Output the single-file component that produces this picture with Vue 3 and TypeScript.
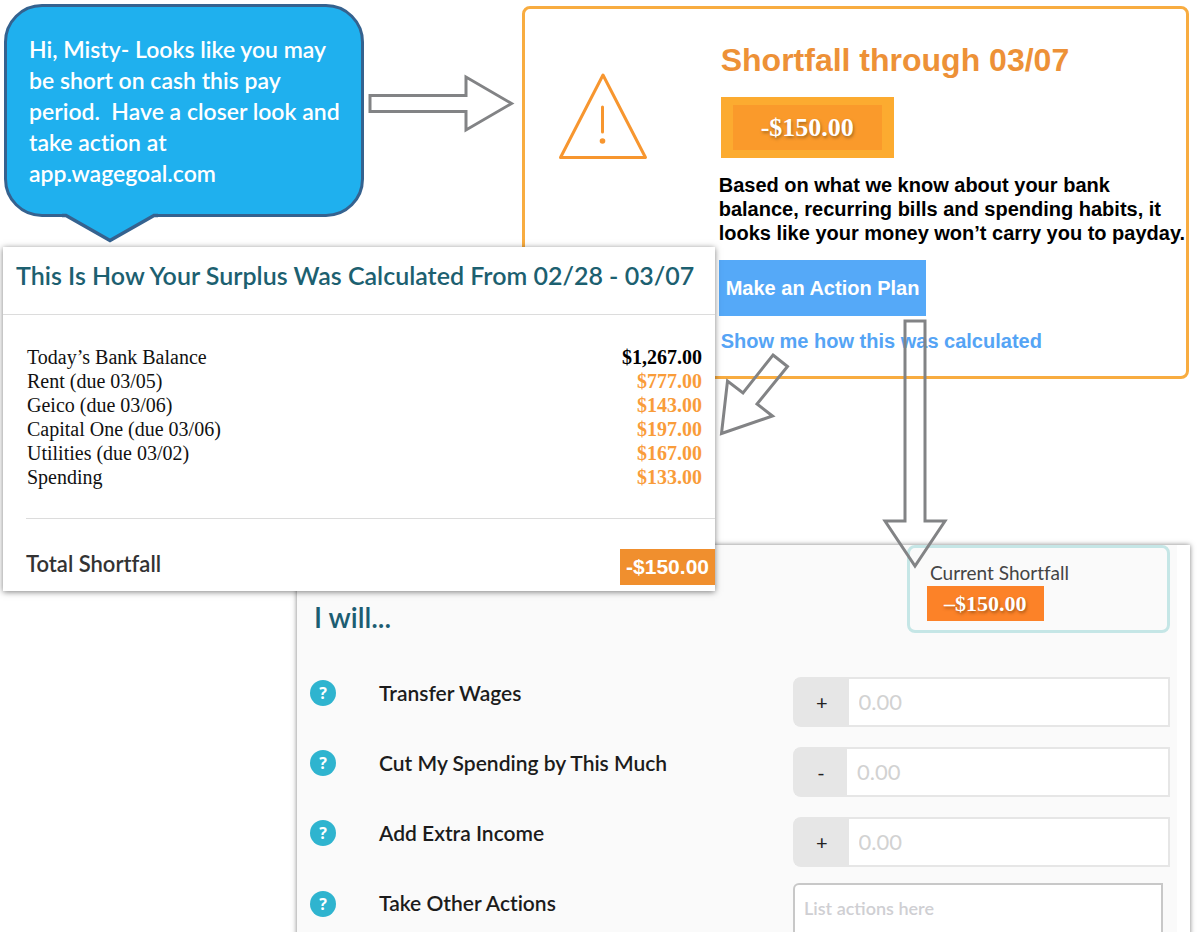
<script setup lang="ts">
import { ref } from 'vue'

interface Bill {
  label: string
  amount: string
  credit?: boolean
}

interface Adjustment {
  id: string
  label: string
  sign: string
}

const bills: Bill[] = [
  { label: 'Today’s Bank Balance', amount: '$1,267.00', credit: true },
  { label: 'Rent (due 03/05)', amount: '$777.00' },
  { label: 'Geico (due 03/06)', amount: '$143.00' },
  { label: 'Capital One (due 03/06)', amount: '$197.00' },
  { label: 'Utilities (due 03/02)', amount: '$167.00' },
  { label: 'Spending', amount: '$133.00' },
]

const adjustments: Adjustment[] = [
  { id: 'transfer', label: 'Transfer Wages', sign: '+' },
  { id: 'cut', label: 'Cut My Spending by This Much', sign: '-' },
  { id: 'income', label: 'Add Extra Income', sign: '+' },
]

const values = ref<Record<string, string>>({ transfer: '', cut: '', income: '' })
const otherActions = ref('')
</script>

<template>
  <main class="board">
    <section class="bubble">
      <p>
        Hi, Misty- Looks like you may<br />
        be short on cash this pay<br />
        period.&nbsp; Have a closer look and<br />
        take action at<br />
        app.wagegoal.com
      </p>
      <svg class="tail" width="96" height="30" viewBox="0 0 96 30" aria-hidden="true">
        <path d="M0 0H96V3H93L48 28L3 3H0Z" fill="#1fb0ee" />
        <path d="M0 2.5H4L48 27.5L92 2.5H96" fill="none" stroke="#35628f" stroke-width="3.5" />
      </svg>
    </section>

    <svg class="arrow arrow-right" width="147" height="60" viewBox="0 0 147 60" aria-hidden="true">
      <path d="M2 22.5H98V4L143.5 30.5L98 57V38.5H2Z" />
    </svg>

    <section class="alert">
      <div class="alert-icon">
        <svg width="90" height="88" viewBox="0 0 90 88" aria-hidden="true">
          <path d="M45 3L87.5 85.5H2.5Z" fill="none" stroke="#f7962f" stroke-width="3" stroke-linejoin="round" />
          <path d="M44.5 35V60" stroke="#f7962f" stroke-width="3" stroke-linecap="round" />
          <circle cx="44.5" cy="69" r="2.8" fill="#f7962f" />
        </svg>
      </div>
      <div class="alert-body">
        <h1>Shortfall through 03/07</h1>
        <div class="amount-frame"><strong>-$150.00</strong></div>
        <p>
          Based on what we know about your bank<br />
          balance, recurring bills and spending habits, it<br />
          looks like your money won’t carry you to payday.
        </p>
        <div class="action">
          <button type="button">Make an Action Plan</button>
          <svg class="arrow arrow-down" width="66" height="250" viewBox="0 0 66 250" aria-hidden="true">
            <path d="M23 2H43V202H63L33 247L3 202H23Z" />
          </svg>
        </div>
        <div class="action">
          <a href="#breakdown">Show me how this was calculated</a>
          <svg class="arrow arrow-left" width="72" height="84" viewBox="0 0 72 84" aria-hidden="true">
            <path d="M54 4L68.5 15.5L38 53L53.5 65L2.5 82.5L8.5 30L24 42Z" />
          </svg>
        </div>
      </div>
    </section>

    <section id="breakdown" class="breakdown">
      <h2>This Is How Your Surplus Was Calculated From 02/28 - 03/07</h2>
      <table>
        <tbody>
          <tr v-for="bill in bills" :key="bill.label">
            <th scope="row">{{ bill.label }}</th>
            <td :class="{ credit: bill.credit }">{{ bill.amount }}</td>
          </tr>
        </tbody>
      </table>
      <div class="total">
        <span>Total Shortfall</span>
        <strong>-$150.00</strong>
      </div>
    </section>

    <section class="plan">
      <header>
        <h2>I will...</h2>
        <div class="current">
          <span>Current Shortfall</span>
          <strong>–$150.00</strong>
        </div>
      </header>
      <form @submit.prevent>
        <div v-for="item in adjustments" :key="item.id" class="row">
          <button type="button" class="help" :aria-label="`About ${item.label}`">?</button>
          <label :for="item.id">{{ item.label }}</label>
          <div class="field">
            <span class="sign">{{ item.sign }}</span>
            <input :id="item.id" v-model="values[item.id]" type="text" placeholder="0.00" />
          </div>
        </div>
        <div class="row other">
          <button type="button" class="help" aria-label="About Take Other Actions">?</button>
          <label for="other">Take Other Actions</label>
          <textarea id="other" v-model="otherActions" placeholder="List actions here"></textarea>
        </div>
      </form>
    </section>
  </main>
</template>

<style>
body {
  background: #fff;
}
</style>

<style scoped>
* {
  box-sizing: border-box;
}

h1,
h2,
p {
  margin: 0;
}

.board {
  display: grid;
  grid-template-columns: 294fr 66fr 160fr 192fr 475fr;
  grid-template-rows: minmax(247px, auto) minmax(132px, auto) minmax(166px, auto) 46px minmax(341px, 1fr);
  min-height: 100vh;
  padding: 0 8px 0 3px;
  overflow: hidden;
  font-family: Lato, "Open Sans", sans-serif;
  font-variant-ligatures: none;
}

.bubble {
  position: relative;
  grid-area: 1 / 1 / 2 / 3;
  align-self: start;
  min-height: 213px;
  margin: 4px -1px 0 1px;
  padding: 27px 0 25px 22px;
  border: 3px solid #35628f;
  border-radius: 38px;
  background: #1fb0ee;
  color: #fff;
  font-size: 23px;
  font-weight: 600;
  line-height: 31px;
  white-space: nowrap;
}

.tail {
  position: absolute;
  top: 100%;
  left: 55px;
  margin-top: -1px;
}

.arrow {
  overflow: visible;
  fill: none;
  stroke: #828385;
  stroke-width: 3;
}

.arrow-right {
  grid-area: 1 / 3 / 2 / 4;
  margin: 73px 0 0 5px;
}

.alert {
  display: grid;
  grid-template-columns: 29% 1fr;
  grid-area: 1 / 4 / 3 / 6;
  margin: 6px 1px 0 -1px;
  border: 3px solid #f8ac40;
  border-radius: 8px;
}

.alert-icon {
  padding: 63px 0 0 33px;
}

.alert-body {
  display: flex;
  flex-direction: column;
  align-items: flex-start;
  padding: 32px 0 0 2px;
  font-family: "Liberation Sans", Arial, sans-serif;
  font-size: 20px;
  font-weight: 700;
  line-height: 24px;
  white-space: nowrap;
}

.alert-body h1 {
  padding-left: 2px;
  color: #ed9137;
  font-size: 32px;
  line-height: 38px;
}

.amount-frame {
  margin: 18px 0 15px 2px;
  padding: 8px 12px;
  background: #fcab30;
}

.amount-frame strong {
  display: block;
  padding: 0 28px;
  background: #fa9a2b;
  color: #fff;
  font-family: "Liberation Serif", "Times New Roman", serif;
  font-size: 26px;
  line-height: 45px;
  text-shadow: 1px 2px 3px rgba(90, 60, 20, 0.5);
}

.alert-body p {
  color: #000;
}

.action {
  position: relative;
}

.action button {
  margin: 15px 0 13px;
  padding: 16px 7px;
  border: 0;
  background: #55a9f8;
  color: #fff;
  font: inherit;
}

.action a {
  padding-left: 2px;
  color: #55a4f5;
  text-decoration: none;
}

.arrow-down {
  position: absolute;
  z-index: 3;
  top: 74px;
  right: -22px;
}

.arrow-left {
  position: absolute;
  z-index: 3;
  top: 22px;
  left: 0;
}

.breakdown {
  z-index: 2;
  display: flex;
  flex-direction: column;
  grid-area: 2 / 1 / 5 / 5;
  background: #fff;
  box-shadow: 0 1px 6px rgba(0, 0, 0, 0.5);
}

.breakdown h2 {
  padding: 11px 0 22px 13px;
  border-bottom: 1px solid #dcdcdc;
  color: #1c6070;
  font-size: 25px;
  font-weight: 600;
  line-height: 34px;
  white-space: nowrap;
}

.breakdown table {
  margin: 30px 13px 29px 24px;
  border-collapse: collapse;
  font-family: "Liberation Serif", "Times New Roman", serif;
  font-size: 20px;
  line-height: 24px;
}

.breakdown th {
  padding: 0;
  color: #111;
  font-weight: 400;
  text-align: left;
}

.breakdown td {
  padding: 0;
  color: #f99c3a;
  font-weight: 700;
  text-align: right;
}

.breakdown td.credit {
  color: #000;
}

.total {
  display: flex;
  align-items: flex-start;
  justify-content: space-between;
  flex: 1;
  margin-left: 23px;
  padding-top: 30px;
  border-top: 1px solid #dcdcdc;
  color: #333;
  font-size: 22px;
  font-weight: 600;
  line-height: 30px;
}

.total strong {
  padding: 0 6px;
  background: #f08f2e;
  color: #fff;
  font-family: "Liberation Sans", Arial, sans-serif;
  font-size: 21px;
  line-height: 36px;
}

.plan {
  z-index: 1;
  display: flex;
  flex-direction: column;
  grid-area: 4 / 2 / 6 / 6;
  padding: 0 7px 0 13px;
  border-right: 13px solid #fff;
  background: #fafafa;
  box-shadow: 0 0 5px rgba(0, 0, 0, 0.5);
}

.plan header {
  display: flex;
  align-items: flex-start;
  justify-content: space-between;
}

.plan h2 {
  padding: 55px 0 0 4px;
  color: #1c5d72;
  font-size: 28px;
  font-weight: 600;
  line-height: 34px;
}

.current {
  display: flex;
  flex-direction: column;
  align-items: flex-start;
  width: 263px;
  height: 88px;
  padding: 14px 17px 0;
  border: 3px solid #c5e6e6;
  border-radius: 8px;
  color: #444;
  font-size: 19px;
  line-height: 22px;
}

.current span {
  padding-left: 3px;
}

.current strong {
  margin-top: 2px;
  padding: 0 17px;
  background: #fc8228;
  color: #fff;
  font-family: "Liberation Serif", "Times New Roman", serif;
  font-size: 22px;
  line-height: 35px;
  text-shadow: 1px 2px 3px rgba(90, 50, 10, 0.5);
}

.plan form {
  display: flex;
  flex: 1;
  flex-direction: column;
  gap: 20px;
  padding-top: 43px;
}

.row {
  display: grid;
  grid-template-columns: 69px 1fr 377px;
  align-items: start;
}

.help {
  width: 26px;
  height: 26px;
  margin: 3px 0;
  padding: 0;
  border: 0;
  border-radius: 50%;
  background: #2fb4cf;
  color: #fff;
  font: 700 16px/26px "Open Sans", sans-serif;
}

.row label {
  color: #1c1c1c;
  font-size: 21px;
  font-weight: 600;
  line-height: 32px;
}

.field {
  display: flex;
  height: 50px;
  border: 2px solid #e6e6e6;
  border-radius: 8px 0 0 8px;
  background: #fff;
}

.sign {
  min-width: 52px;
  padding: 0 21px;
  background: #e6e6e6;
  color: #222;
  font-size: 20px;
  line-height: 46px;
  text-align: center;
}

.field input {
  flex: 1;
  min-width: 0;
  padding: 0 10px;
  border: 0;
  background: transparent;
  color: #333;
  font: 400 22px/46px Lato, "Open Sans", sans-serif;
}

.field input::placeholder {
  color: #d2d2d2;
  opacity: 1;
}

.other {
  flex: 1;
  align-items: stretch;
  margin-top: -4px;
}

.other .help {
  margin: 8px 0;
}

.other label {
  line-height: 40px;
}

.other textarea {
  min-height: 48px;
  margin-right: 7px;
  padding: 11px 9px;
  border: 2px solid #c8c8c8;
  border-bottom: 0;
  border-radius: 6px 0 0 0;
  background: #fff;
  color: #333;
  font: 600 18px/24px Lato, "Open Sans", sans-serif;
  resize: none;
}

.other textarea::placeholder {
  color: #cfcfd3;
  opacity: 1;
}
</style>
